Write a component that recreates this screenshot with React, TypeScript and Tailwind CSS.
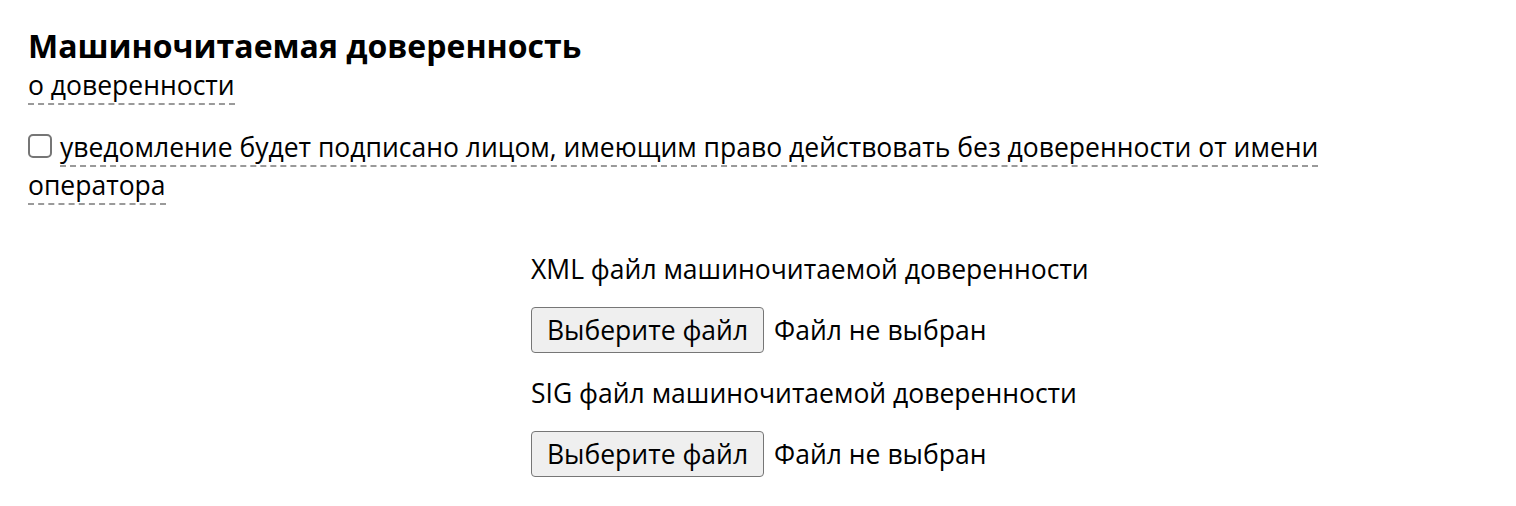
import React from "react";

function FileRow({ label }: { label: string }) {
  return (
    <div className="flex flex-col">
      <div className="h-[38px] leading-[38px]">{label}</div>
      <div className="mt-[19px] flex items-center h-[46px]">
        <button className="h-[46px] px-[15px] bg-[#efefef] border border-[#767676] rounded-[4px] text-[26.5px] leading-[32px] text-black">
          Выберите файл
        </button>
        <span className="ml-[10px]">Файл не выбран</span>
      </div>
    </div>
  );
}

export default function App() {
  return (
    <div
      className="bg-white text-black text-[26.5px] leading-[38px] px-[28px] pt-[26px] w-[1516px] h-[506px]"
      style={{ fontFamily: '"Open Sans", "Noto Sans", sans-serif' }}
    >
      <h2 className="text-[32px] font-bold leading-[40px]">Машиночитаемая доверенность</h2>
      <div>
        <span className="border-b-2 border-dashed border-[#9a9a9a]">о доверенности</span>
      </div>
      <div className="mt-[24px] w-[1310px]">
        <span className="inline-block w-[24px] h-[24px] border-2 border-[#767676] rounded-[5px] align-[-1px] mr-[8px]"></span>
        <span className="border-b-2 border-dashed border-[#9a9a9a]">
          уведомление будет подписано лицом, имеющим право действовать без доверенности от имени оператора
        </span>
      </div>
      <div className="ml-[503px] mt-[46px] flex flex-col gap-[21px]">
        <FileRow label="XML файл машиночитаемой доверенности" />
        <FileRow label="SIG файл машиночитаемой доверенности" />
      </div>
    </div>
  );
}
